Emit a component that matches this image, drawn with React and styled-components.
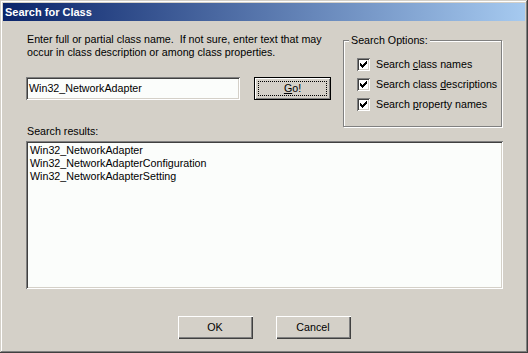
import React from 'react'
import styled, { createGlobalStyle } from 'styled-components'

const Global = createGlobalStyle`
  html, body { margin: 0; padding: 0; background: #d4d0c8; }
  * { box-sizing: border-box; }
`

const face = '#d4d0c8'
const font = `"Liberation Sans", Arial, sans-serif`

const Window = styled.div`
  width: 528px;
  height: 353px;
  background: ${face};
  padding: 3px;
  font-family: ${font};
  font-size: 10.7px;
  line-height: 13px;
  color: #000;
  box-shadow: inset -1px -1px 0 #404040, inset 1px 1px 0 ${face},
    inset -2px -2px 0 #808080, inset 2px 2px 0 #fff;
  display: flex;
  flex-direction: column;
`

const TitleBar = styled.div`
  height: 18px;
  display: flex;
  align-items: center;
  padding-left: 2px;
  background: linear-gradient(to right, #0a246a, #a6caf0);
  color: #fff;
  font-weight: bold;
  font-size: 11px;
`

const Body = styled.div`
  padding: 12px 21px 0 23px;
  display: flex;
  flex-direction: column;
`

const Top = styled.div`
  display: grid;
  grid-template-columns: 305px 160px;
  column-gap: 12px;
`

const LeftCol = styled.div`
  display: flex;
  flex-direction: column;
`

const Hint = styled.p`
  margin: 0;
  padding-left: 1px;
`

const SearchRow = styled.div`
  display: flex;
  gap: 14px;
  margin-top: 18px;
`

const sunken = `
  background: #fbfdfb;
  box-shadow: inset 1px 1px 0 #808080, inset -1px -1px 0 #fff,
    inset 2px 2px 0 #404040, inset -2px -2px 0 ${face};
`

const TextBox = styled.div`
  ${sunken}
  width: 214px;
  height: 23px;
  display: flex;
  align-items: center;
  padding-left: 3px;
`

const Button = styled.button`
  width: ${p => p.$w || 75}px;
  height: 23px;
  font: inherit;
  color: #000;
  background: ${face};
  border: ${p => (p.$default ? '1px solid #000' : 'none')};
  box-shadow: ${p =>
    p.$default
      ? `inset 1px 1px 0 #fff, inset -1px -1px 0 #808080`
      : `inset 1px 1px 0 #fff, inset -1px -1px 0 #404040, inset -2px -2px 0 #808080`};
  display: flex;
  align-items: center;
  justify-content: center;
  padding: 3px;
`

const Focus = styled.span`
  flex: 1;
  align-self: stretch;
  border: 1px dotted #000;
  display: flex;
  align-items: center;
  justify-content: center;
`

const ResultsLabel = styled.div`
  margin-top: 25px;
  padding-left: 1px;
`

const Group = styled.fieldset`
  margin: 1px 0 0 0;
  padding: 11px 0 15px 13px;
  width: 159px;
  border: 1px solid #808080;
  box-shadow: inset 1px 1px 0 #fff, 1px 1px 0 #fff;
  align-self: start;
  display: flex;
  flex-direction: column;
  gap: 7px;
`

const Legend = styled.legend`
  padding: 0 2px;
  margin-left: -8px;
  background: ${face};
  line-height: 13px;
`

const CheckRow = styled.label`
  display: flex;
  align-items: center;
  gap: 6px;
  height: 13px;
`

const Box = styled.span`
  width: 13px;
  height: 13px;
  background: #fff;
  box-shadow: inset 1px 1px 0 #808080, inset -1px -1px 0 #fff,
    inset 2px 2px 0 #404040, inset -2px -2px 0 ${face};
  display: flex;
  align-items: center;
  justify-content: center;
  flex-shrink: 0;
`

const List = styled.div`
  ${sunken}
  margin-top: 3px;
  width: 477px;
  height: 148px;
  padding: 3px 4px;
`

const Footer = styled.div`
  display: flex;
  justify-content: center;
  gap: 23px;
  margin-top: 27px;
  padding-right: 2px;
`

function Check() {
  const cols = [2, 3, 4, 3, 2, 1, 0]
  return (
    <svg width="7" height="7" viewBox="0 0 7 7" shapeRendering="crispEdges">
      {cols.map((y, x) => (
        <rect key={x} x={x} y={y} width="1" height="3" fill="#000" />
      ))}
    </svg>
  )
}

function Option({ before, hot, after }) {
  return (
    <CheckRow>
      <Box><Check /></Box>
      <span>{before}<u>{hot}</u>{after}</span>
    </CheckRow>
  )
}

export default function App() {
  return (
    <>
      <Global />
      <Window>
        <TitleBar>Search for Class</TitleBar>
        <Body>
          <Top>
            <LeftCol>
              <Hint>
                Enter full or partial class name.&nbsp; If not sure, enter text that may
                <br />
                occur in class description or among class properties.
              </Hint>
              <SearchRow>
                <TextBox>Win32_NetworkAdapter</TextBox>
                <Button $default $w={77}>
                  <Focus><u>G</u>o!</Focus>
                </Button>
              </SearchRow>
              <ResultsLabel>Search results:</ResultsLabel>
            </LeftCol>
            <Group>
              <Legend>Search Options:</Legend>
              <Option before="Search " hot="c" after="lass names" />
              <Option before="Search class " hot="d" after="escriptions" />
              <Option before="Search " hot="p" after="roperty names" />
            </Group>
          </Top>
          <List>
            <div>Win32_NetworkAdapter</div>
            <div>Win32_NetworkAdapterConfiguration</div>
            <div>Win32_NetworkAdapterSetting</div>
          </List>
          <Footer>
            <Button>OK</Button>
            <Button>Cancel</Button>
          </Footer>
        </Body>
      </Window>
    </>
  )
}
